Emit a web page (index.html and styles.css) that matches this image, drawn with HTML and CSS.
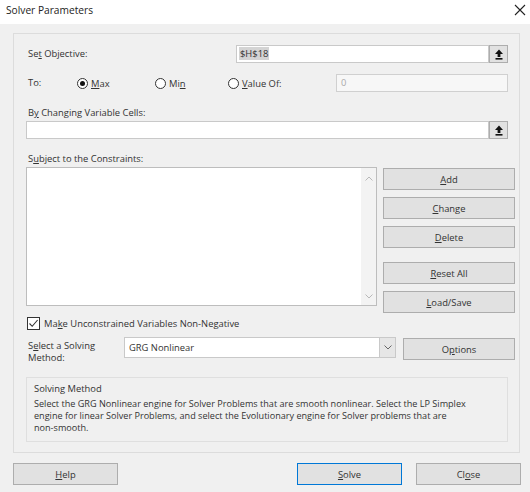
FILE: index.html
```html
<!DOCTYPE html>
<html>
<head>
<meta charset="utf-8">
<title>Solver Parameters</title>
<link rel="stylesheet" href="styles.css">
</head>
<body>
<div class="dialog">
  <div class="titlebar">
    <span class="title">Solver Parameters</span>
    <svg class="close" width="12" height="12" viewBox="0 0 12 12"><path d="M1 1L11 11M11 1L1 11" stroke="#222" stroke-width="1.1" fill="none"/></svg>
  </div>
  <div class="panel">
    <div class="row obj">
      <span class="lbl lbl-obj">Se<u>t</u> Objective:</span>
      <div class="ref obj-ref"><span class="sel">$H$18</span></div>
      <div class="up"><svg width="10" height="11" viewBox="0 0 10 11"><path d="M5 0.5L9 5H6.4V8H3.6V5H1Z" fill="#111"/><rect x="1.5" y="9" width="7" height="1.6" fill="#111"/></svg></div>
    </div>
    <div class="row to">
      <span class="lbl lbl-to">To:</span>
      <label class="radio r-max"><span class="dot on"></span><u>M</u>ax</label>
      <label class="radio r-min"><span class="dot"></span>Mi<u>n</u></label>
      <label class="radio r-val"><span class="dot"></span><u>V</u>alue Of:</label>
      <div class="ref val-ref disabled">0</div>
    </div>
    <div class="lbl caption by">B<u>y</u> Changing Variable Cells:</div>
    <div class="row var">
      <div class="ref var-ref"></div>
      <div class="up"><svg width="10" height="11" viewBox="0 0 10 11"><path d="M5 0.5L9 5H6.4V8H3.6V5H1Z" fill="#111"/><rect x="1.5" y="9" width="7" height="1.6" fill="#111"/></svg></div>
    </div>
    <div class="lbl caption subj">S<u>u</u>bject to the Constraints:</div>
    <div class="constraints">
      <div class="listbox">
        <div class="list-body"></div>
        <div class="scroll">
          <svg width="8" height="5" viewBox="0 0 8 5"><path d="M0.5 4.5L4 1L7.5 4.5" stroke="#b8b8b8" fill="none"/></svg>
          <svg width="8" height="5" viewBox="0 0 8 5"><path d="M0.5 0.5L4 4L7.5 0.5" stroke="#b8b8b8" fill="none"/></svg>
        </div>
      </div>
      <div class="side">
        <button class="btn"><u>A</u>dd</button>
        <button class="btn"><u>C</u>hange</button>
        <button class="btn"><u>D</u>elete</button>
        <button class="btn gap"><u>R</u>eset All</button>
        <button class="btn"><u>L</u>oad/Save</button>
      </div>
    </div>
    <label class="check-row">
      <span class="check"><svg width="11" height="11" viewBox="0 0 11 11"><path d="M1.5 5.5L4.2 8.3L9.6 2" stroke="#333" stroke-width="1.1" fill="none"/></svg></span>
      Ma<u>k</u>e Unconstrained Variables Non-Negative
    </label>
    <div class="row method">
      <span class="lbl lbl-method"><span class="ml">S<u>e</u>lect a Solving</span><span class="ml">Method:</span></span>
      <div class="select">
        <span class="sel-text">GRG Nonlinear</span>
        <span class="sel-btn"><svg width="8" height="5" viewBox="0 0 8 5"><path d="M0.5 0.5L4 4L7.5 0.5" stroke="#666" fill="none"/></svg></span>
      </div>
      <button class="btn options">O<u>p</u>tions</button>
    </div>
    <div class="group">
      <div class="group-title">Solving Method</div>
      <div class="group-text">Select the GRG Nonlinear engine for Solver Problems that are smooth nonlinear. Select the LP Simplex engine for linear Solver Problems, and select the Evolutionary engine for Solver problems that are <span class="nw">non-smooth.</span></div>
    </div>
  </div>
  <div class="bottom">
    <button class="btn bb"><u>H</u>elp</button>
    <div class="spacer"></div>
    <button class="btn bb default"><u>S</u>olve</button>
    <button class="btn bb">Cl<u>o</u>se</button>
  </div>
</div>
</body>
</html>
```
FILE: styles.css
```css
* { box-sizing: border-box; }
html, body { margin: 0; padding: 0; }
body {
  width: 530px;
  height: 492px;
  background: #f0f0f0;
  font-family: "Open Sans", "Noto Sans", sans-serif;
  font-size: 9.4px;
  color: #333;
  overflow: hidden;
}
u { text-decoration: underline; text-underline-offset: 1px; }
.dialog { width: 530px; height: 492px; }
.titlebar {
  height: 24px;
  background: #fff;
  display: flex;
  align-items: center;
  padding: 0 4px 4px 6px;
}
.title { font-size: 10.2px; color: #222; flex: 1; }
.close { margin-top: -1px; }

.panel {
  margin: 9px 0 0 13px;
  width: 507px;
  height: 420px;
  border: 1px solid #dcdcdc;
  padding: 11px 0 0 12px;
}
.row { display: flex; align-items: center; }
.lbl { padding-left: 2px; line-height: 14px; }
.obj { height: 18px; }
.lbl-obj { width: 210px; }
.ref {
  height: 18px;
  background: #fff;
  border: 1px solid #c9c9c9;
  padding: 0 4px;
  line-height: 16px;
}
.obj-ref { width: 253px; padding-left: 2px; }
.sel { background: #d4d4d4; padding: 0 1px; }
.up {
  width: 19px;
  height: 18px;
  background: #e1e1e1;
  border: 1px solid #adadad;
  display: flex;
  align-items: center;
  justify-content: center;
}
.to { height: 18px; margin-top: 11px; }
.lbl-to { width: 51px; }
.radio { display: flex; align-items: center; }
.r-max { width: 78px; }
.r-min { width: 73px; }
.r-val { width: 108px; }
.dot {
  width: 11px;
  height: 11px;
  border: 1px solid #333;
  border-radius: 50%;
  margin-right: 3px;
  position: relative;
  background: #fff;
}
.dot.on::after {
  content: "";
  position: absolute;
  left: 2px; top: 2px;
  width: 5px; height: 5px;
  border-radius: 50%;
  background: #111;
}
.val-ref { width: 172px; }
.disabled { background: #f7f7f7; border-color: #d0d0d0; color: #aaa; }
.caption { height: 14px; }
.by { margin-top: 14px; }
.var { margin-top: 1px; height: 18px; }
.var-ref { width: 463px; }
.subj { margin-top: 13px; }

.constraints { display: flex; margin-top: 1px; height: 148px; }
.listbox {
  width: 351px;
  height: 139px;
  border: 1px solid #bdbdbd;
  background: #fff;
  display: flex;
}
.list-body { flex: 1; }
.scroll {
  width: 15px;
  background: #f3f3f3;
  display: flex;
  flex-direction: column;
  justify-content: space-between;
  align-items: center;
  padding: 8px 0 6px;
}
.side { margin-left: 6px; padding-top: 1px; display: flex; flex-direction: column; gap: 7px; }
.btn {
  font-family: inherit;
  font-size: 9.4px;
  color: #333;
  width: 132px;
  height: 22px;
  background: #e1e1e1;
  border: 1px solid #adadad;
  padding: 0;
  margin: 0;
}
.btn.gap { margin-top: 7px; }

.check-row { display: flex; align-items: center; height: 14px; margin-top: 1px; padding-left: 1px; }
.check {
  width: 13px;
  height: 13px;
  border: 1px solid #333;
  background: #fff;
  margin-right: 4px;
  display: flex;
  align-items: center;
  justify-content: center;
}
.method { align-items: flex-start; margin-top: 7px; height: 27px; }
.lbl-method { width: 98px; margin-top: 3px; display: flex; flex-direction: column; }
.ml { display: block; height: 12px; line-height: 12px; }
.select {
  width: 272px;
  height: 21px;
  background: #fff;
  border: 1px solid #c9c9c9;
  display: flex;
}
.sel-text { flex: 1; padding-left: 4px; line-height: 19px; }
.sel-btn {
  width: 16px;
  background: #e6e6e6;
  border-left: 1px solid #c9c9c9;
  display: flex;
  align-items: center;
  justify-content: center;
}
.options { width: 112px; margin-left: 7px; margin-top: 1px; }

.group {
  margin-top: 13px;
  width: 482px;
  height: 65px;
  border: 1px solid #dfdfdf;
  padding: 4px 22px 0 7px;
}
.group-title { line-height: 13px; }
.group-text { margin-top: 3px; line-height: 12px; font-size: 9.1px; }
.nw { white-space: nowrap; }

.bottom { display: flex; margin-top: 10px; padding: 0 9px 0 13px; }
.spacer { flex: 1; }
.bb { width: 105px; }
.bb.default { border-color: #0078d7; margin-right: 14px; }
```
